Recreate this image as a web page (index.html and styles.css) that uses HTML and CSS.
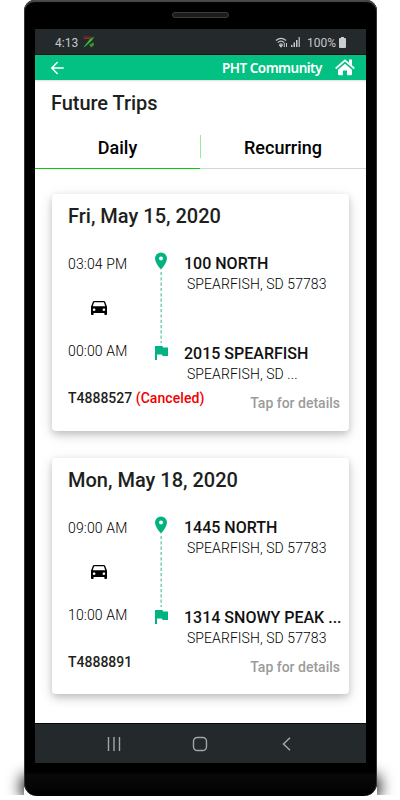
FILE: index.html
```html
<!DOCTYPE html>
<html lang="en">
<head>
<meta charset="utf-8">
<title>Future Trips</title>
<link rel="stylesheet" href="styles.css">
</head>
<body>
<svg width="0" height="0" class="defs" aria-hidden="true">
  <symbol id="car" viewBox="3 4 18 17" preserveAspectRatio="none"><path d="M18.92 5.01C18.72 4.42 18.16 4 17.5 4h-11c-.66 0-1.21.42-1.42 1.01L3 11v8.500c0 .83.45 1.500 1 1.500h1c.55 0 1-.67 1-1.500V18.500h12v1c0 .83.45 1.500 1 1.500h1c.55 0 1-.67 1-1.500V11l-2.080-5.990zM6.500 16c-.83 0-1.500-.67-1.500-1.500S5.670 13 6.500 13s1.500.67 1.500 1.500S7.330 16 6.500 16zm11 0c-.83 0-1.500-.67-1.500-1.500s.67-1.500 1.500-1.500 1.500.67 1.500 1.500-.67 1.500-1.500 1.500zM5 10.500l1.500-5h11l1.500 5H5z"/></symbol>
  <symbol id="route" viewBox="0 0 16 110">
    <path fill="#00b380" fill-rule="evenodd" d="M8 .5a6 6 0 0 0-6 6C2 11 8 17.500 8 17.500S14 11 14 6.500a6 6 0 0 0-6-6zM8 4.600a2 2 0 1 1 0 4 2 2 0 0 1 0-4z"/>
    <path stroke="#7ed4b7" stroke-width="1.600" stroke-dasharray="3.200 2.100" d="M8.200 20v71"/>
    <path fill="#00b380" d="M2 94h7.500l.5 1.500h5v8.500h-5.500l-.5-1.600H4v5.600H2z"/>
  </symbol>
</svg>
<div class="phone">
  <div class="speaker"></div>
  <div class="screen">
    <div class="status">
      <span class="clock">4:13</span>
      <svg class="app" width="12" height="12" viewBox="0 0 12 12"><path d="M.5 11.300 7 3l4.300-2.500-2.500 4-6.500 6z" fill="#35c32b"/><path d="m6 8.500 4.500-2.200.5 3-3 2.200z" fill="#388e35"/><path d="M.5 1h8M1 2.500h7" stroke="#9a2a2a" stroke-width="1"/></svg>
      <svg class="wifi" width="14" height="11" viewBox="0 0 14 11" fill="none" stroke="#c6c8c9" stroke-width="1.200"><path d="M1 3.500Q6 -.8 11 3.500M2.700 5.600Q6 2.800 9.300 5.600M4.400 7.600Q6 6.200 7.600 7.600"/><path d="m5 8.500 1 1.200 1-1.200z" fill="#c6c8c9"/><path d="M9.300 6v4M11.500 6v4" stroke-width="1"/></svg>
      <svg class="signal" width="10" height="10" viewBox="0 0 10 10"><path d="M0 8h1.500v2H0zM2.500 5.500H4V10H2.500zM5 3h1.500v7H5z" fill="#c6c8c9"/><path d="M7.500 0H9v10H7.500z" fill="#a5a8aa"/></svg>
      <span class="percent">100%</span>
      <svg class="battery" width="7" height="11" viewBox="0 0 7 11"><path d="M2 0h3v1h1q1 0 1 1v8q0 1-1 1H1q-1 0-1-1V2q0-1 1-1h1z" fill="#cbcdce"/></svg>
    </div>
    <header class="bar">
      <svg width="14" height="14" viewBox="0 0 14 14" fill="none" stroke="#fff" stroke-width="1.500"><path d="M13.800 7H2M7.700 1 1.800 7l5.900 6"/></svg>
      <span class="brand">PHT Community</span>
      <svg width="20" height="17" viewBox="0 0 20 17"><path fill="#fff" d="M10 4.800 17 10.800V15q0 1.200-1.200 1.200H12V11.500H8v4.700H4.200Q3 16.200 3 15v-4.200z"/><path fill="none" stroke="#fff" stroke-width="1.800" d="M.7 9.500 10 1.400l9.300 8.100"/><path fill="#fff" d="M14 .6h3v6l-3-2.700z"/></svg>
    </header>
    <main class="content">
      <h1>Future Trips</h1>
      <nav class="tabs">
        <div class="tab active">Daily</div>
        <div class="tab">Recurring</div>
      </nav>
      <section class="trips">
        <article class="card">
          <h2>Fri, May 15, 2020</h2>
          <div class="trip">
            <div class="times"><span>03:04 PM</span><svg width="16" height="14"><use href="#car"/></svg><span>00:00 AM</span></div>
            <svg class="route" width="16" height="110"><use href="#route"/></svg>
            <div class="stops">
              <div><h3>100 NORTH</h3><p>SPEARFISH, SD 57783</p></div>
              <div><h3>2015 SPEARFISH</h3><p>SPEARFISH, SD ...</p></div>
            </div>
          </div>
          <footer><span class="id">T4888527 <em>(Canceled)</em></span><span class="tap">Tap for details</span></footer>
        </article>
        <article class="card">
          <h2>Mon, May 18, 2020</h2>
          <div class="trip">
            <div class="times"><span>09:00 AM</span><svg width="16" height="14"><use href="#car"/></svg><span>10:00 AM</span></div>
            <svg class="route" width="16" height="110"><use href="#route"/></svg>
            <div class="stops">
              <div><h3>1445 NORTH</h3><p>SPEARFISH, SD 57783</p></div>
              <div><h3>1314 SNOWY PEAK ...</h3><p>SPEARFISH, SD 57783</p></div>
            </div>
          </div>
          <footer><span class="id">T4888891</span><span class="tap">Tap for details</span></footer>
        </article>
      </section>
    </main>
    <div class="softkeys">
      <svg width="14" height="14" viewBox="0 0 14 14" stroke="#a3a6a8" stroke-width="1.400"><path d="M1.500 0v14M7 0v14M12.500 0v14"/></svg>
      <svg width="16" height="16" viewBox="0 0 16 16" fill="none" stroke="#a3a6a8" stroke-width="1.400"><rect x="1.500" y="1.500" width="13" height="13" rx="3.800"/></svg>
      <svg width="9" height="14" viewBox="0 0 9 14" fill="none" stroke="#a3a6a8" stroke-width="1.500"><path d="M8 .8 1.500 7 8 13.200"/></svg>
    </div>
  </div>
</div>
</body>
</html>
```
FILE: styles.css
```css
* { box-sizing: border-box; margin: 0; padding: 0; }
body { width: 400px; height: 800px; overflow: hidden; background: #fff; font-family: Roboto, "Liberation Sans", sans-serif; color: #1d1f20; }
svg { display: block; flex: none; }
.defs { position: absolute; }
.phone { position: relative; width: 353px; height: 796px; margin: 0 0 0 24px; padding: 12px 11px 0; background: linear-gradient(#000 0 133px, #000 772px, #090909 775px, #050505 788px, #000 792px); border-radius: 11px 11px 13px 13px; box-shadow: inset 0 2px 1px #4b4b4b, inset 1px 0 0 #333, inset -1px 0 0 #333; }
.phone::before { content: ""; position: absolute; z-index: -1; left: 0; right: 0; bottom: 0; height: 18px; box-shadow: 0 0 15px 2px #000; clip-path: inset(-30px -30px 1px -30px); }
.speaker { width: 57px; height: 6px; margin: 0 auto 11px; border: 1px solid #3c3c3c; border-radius: 3px; background: #1c1c1c; }
.screen { width: 331px; height: 734px; display: flex; flex-direction: column; overflow: hidden; }
.status { height: 26px; flex: none; display: flex; align-items: center; padding: 1px 20px 0; background: #24292c; border-bottom: 1px solid #1a1119; color: #c6c8c9; }
.clock { font-size: 12px; line-height: 14px; padding-top: 1px; }
.app { margin-left: 5px; }
.wifi { margin-left: auto; }
.signal { margin-left: 2px; }
.percent { margin-left: 6px; padding-top: 1px; font-size: 12px; line-height: 14px; }
.battery { margin-left: 3px; }
.bar { height: 25px; flex: none; display: flex; align-items: center; padding: 0 11px 0 15px; background: #03c182; color: #fff; }
.brand { margin: 0 13px 0 auto; font: 600 13.500px/20px "Noto Sans", sans-serif; letter-spacing: -.5px; }
.content { height: 643px; flex: none; background: #fff; box-shadow: inset 0 2px 2px -1px #ddd; display: flex; flex-direction: column; }
h1 { height: 46px; padding-left: 16px; font-size: 20px; line-height: 46px; font-weight: 500; letter-spacing: -.05px; }
.tabs { display: flex; height: 43px; border-bottom: 1px solid #cfd6d6; }
.tab { width: 166px; position: relative; text-align: center; line-height: 43px; font-size: 18px; font-weight: 500; color: #000; }
.active { width: 165px; height: 43px; border-bottom: 1px solid #00cf0a; }
.active::after { content: ""; position: absolute; right: -1px; top: 9px; width: 1px; height: 23px; background: #8ff09a; }
.trips { padding: 25px 17px 0; height: 538px; overflow: hidden; display: flex; flex-direction: column; gap: 27px; }
.card { flex: none; height: 236.500px; padding-top: 10px; background: #fff; border-radius: 4px; box-shadow: 0 3px 6px rgba(0,0,0,.15), 0 4px 14px rgba(0,0,0,.15); }
h2 { height: 48px; padding-left: 16px; line-height: 24px; font-size: 20px; font-weight: 500; }
.trip { display: flex; height: 134px; padding-left: 16px; }
.times { width: 62px; height: 112px; display: flex; flex-direction: column; justify-content: space-between; white-space: nowrap; font-size: 14px; letter-spacing: .15px; font-weight: 300; line-height: 25px; color: #000; }
.times svg { margin-left: 23px; }
.route { margin-left: 23px; }
.stops { margin-left: 15px; display: flex; flex-direction: column; gap: 49px; white-space: nowrap; }
h3 { line-height: 24px; font-size: 16px; font-weight: 500; height: 23px; color: #111; }
p { padding-left: 3px; line-height: 18px; font-size: 14px; letter-spacing: .07px; font-weight: 300; color: #000; }
footer { display: flex; justify-content: space-between; padding: 0 9px 0 16px; font-size: 14px; line-height: 24px; font-weight: 500; }
em { color: #f00000; font-style: normal; letter-spacing: .08px; }
.tap { padding-top: 5px; color: #9b9b9b; }
.softkeys { height: 40px; flex: none; display: flex; align-items: center; justify-content: space-between; padding: 0 75px 0 72px; background: #24292c; border-top: 1px solid #080808; }
.softkeys svg:nth-child(2) { margin-right: 3px; }
```
